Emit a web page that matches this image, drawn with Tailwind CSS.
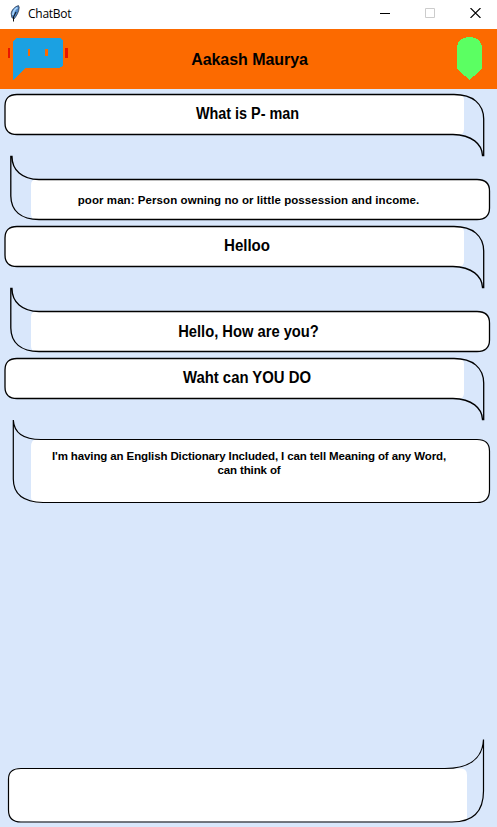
<!DOCTYPE html>
<html lang="en">
<head>
<meta charset="utf-8">
<title>ChatBot</title>
<script src="https://cdn.jsdelivr.net/npm/@tailwindcss/browser@4"></script>
</head>
<body class="w-[497px] h-[827px] overflow-hidden bg-[#d9e7fb] flex flex-col font-['Liberation_Sans',Arial,sans-serif] text-black">
<svg class="hidden">
  <defs>
    <g id="user">
      <path d="M16 5.5H459Q464 5.5 464 11V40Q464 45.500 459 45.500H16Q5 45.500 5 35V16Q5 5.500 16 5.500Z" fill="#fff"/>
      <path d="M454 5.500H17Q5 5.500 5 17V34Q5 45.500 17 45.500H453C472 46 482 55 482.500 66.500H483.700V30C483.500 15 473 5.500 454 5.500Z" fill="none" stroke="#000" stroke-width="1.300"/>
    </g>
    <g id="bot">
      <path d="M36 24.500H478Q489.500 24.500 489.500 36V53Q489.500 64.500 478 64.500H36Q31 64.500 31 59V30Q31 24.500 36 24.500Z" fill="#fff"/>
      <path d="M39 24.500H477Q489.500 24.500 489.500 36V53Q489.500 64.500 477 64.500H39C21 64.500 11 56 10.800 41V1.500H12C12 15 22 24.500 39 24.500Z" fill="none" stroke="#000" stroke-width="1.300"/>
    </g>
  </defs>
</svg>
<header class="h-[29px] shrink-0 bg-white flex items-center justify-between pl-[10px] pr-[15px]">
  <div class="flex items-center gap-[8px]">
    <svg class="w-[10px] h-[17px] -mt-[3px]" viewBox="0 0 10 17">
      <path d="M8.500 .6C5 1.500 1.500 5 1.200 8.500L1.800 12.500L4 14C6.500 11 9 7 9.200 2.500Z" fill="#4f86c6" stroke="#1c2a3c" stroke-width=".7"/>
      <path d="M7.500 2.500C5 4 3 7 2.800 10" stroke="#a9d4fa" stroke-width="1.800" fill="none"/>
      <path d="M6 7L3.500 12V16.500" stroke="#111" stroke-width="1" fill="none"/>
    </svg>
    <span class="font-['Open_Sans','Noto_Sans',sans-serif] text-[12px] leading-[16px] tracking-[-0.25px] -mt-[2px]">ChatBot</span>
  </div>
  <div class="flex items-center gap-[35px] -mt-[3px] mr-px">
    <svg class="w-[10px] h-[10px]" viewBox="0 0 10 10"><path d="M0 5.500H10" stroke="#000"/></svg>
    <svg class="w-[10px] h-[10px]" viewBox="0 0 10 10"><path d="M.5 .5H9.500V9.500H.5Z" stroke="#ccc" fill="none"/></svg>
    <svg class="w-[11px] h-[10px]" viewBox="0 0 11 10"><path d="M.5 0L10.500 10M10.500 0L.5 10" stroke="#000" stroke-width="1.100"/></svg>
  </div>
</header>
<section class="h-[60px] shrink-0 bg-[#fc6a00] flex items-start justify-between pl-[8px] pr-[15px] pt-[8px]">
  <svg class="w-[60px] h-[44px]" viewBox="0 0 60 44" shape-rendering="crispEdges">
    <path d="M8 1H52Q55 2 55 5V27Q55 30 51 31H18L5 43V4Z" fill="#1ba1e2"/>
    <path d="M0 11h2v10H0zM57 11h3v10h-3z" fill="#e81500"/>
    <path d="M20 12h2v7h-2zM37 12h3v7h-3z" fill="#fc6a00"/>
  </svg>
  <h1 class="mt-[13px] h-[20px] leading-[20px] w-[240px] -ml-[6px] mr-[20px] text-center text-[16px] tracking-[-0.05px] font-bold">Aakash Maurya</h1>
  <svg class="w-[25px] h-[44px]" viewBox="0 0 25 44" shape-rendering="crispEdges">
    <path d="M0 11C0 4 5 0 12.500 0S25 4 25 11V32L12.500 43L0 32Z" fill="#5bff62"/>
  </svg>
</section>
<main class="grow flex flex-col">
  <div class="relative h-[66px] pt-[15px] shrink-0"><svg class="absolute inset-0 w-[497px] h-[66px] overflow-visible"><use href="#user"/></svg><p class="relative w-[495px] text-center text-[16px] scale-x-[0.9] leading-[20px] font-bold">What is P- man</p></div>
  <div class="relative h-[66px] pt-[35px] shrink-0"><svg class="absolute inset-0 w-[497px] h-[66px] overflow-visible"><use href="#bot"/></svg><p class="relative w-[497px] text-center text-[11.500px] tracking-[0.07px] leading-[20px] font-bold">poor man: Person owning no or little possession and income.</p></div>
  <div class="relative h-[66px] pt-[15px] shrink-0"><svg class="absolute inset-0 w-[497px] h-[66px] overflow-visible"><use href="#user"/></svg><p class="relative w-[494px] text-center text-[16px] scale-x-[0.94] leading-[20px] font-bold">Helloo</p></div>
  <div class="relative h-[66px] pt-[35px] shrink-0"><svg class="absolute inset-0 w-[497px] h-[66px] overflow-visible"><use href="#bot"/></svg><p class="relative w-[497px] text-center text-[16px] scale-x-[0.92] leading-[20px] font-bold">Hello, How are you?</p></div>
  <div class="relative h-[66px] pt-[15px] shrink-0"><svg class="absolute inset-0 w-[497px] h-[66px] overflow-visible"><use href="#user"/></svg><p class="relative w-[494px] text-center text-[16px] scale-x-[0.93] leading-[20px] font-bold">Waht can YOU DO</p></div>
  <div class="relative h-[86px] pt-[30px] shrink-0">
    <svg class="absolute inset-0 w-[497px] h-[86px] overflow-visible">
      <path d="M36 20.500H478Q489.500 20.500 489.500 32V71Q489.500 83.500 478 83.500H36Q31 83.500 31 78V28Q31 20.500 36 20.500Z" fill="#fff"/>
      <path d="M41 20.500H477Q489.500 20.500 489.500 32V71Q489.500 83.500 477 83.500H43C23 83 13.300 75 13.300 60V1C14 13 22 20.500 41 20.500Z" fill="none" stroke="#000" stroke-width="1.200"/>
    </svg>
    <p class="relative w-[498px] text-center text-[11.500px] tracking-[-0.115px] leading-[14px] font-bold">I'm having an English Dictionary Included, I can tell Meaning of any Word,<br>can think of</p>
  </div>
</main>
<footer class="h-[88px] shrink-0">
  <svg class="w-[497px] h-[88px]" viewBox="0 0 497 88">
    <path d="M20 29.500H461Q467 29.500 467 36V77Q467 82.500 462 82.500H20Q8.500 82.500 8.500 72V40Q8.500 29.500 20 29.500Z" fill="#fff"/>
    <path d="M445 29.500H21Q8.500 29.500 8.500 40V71Q8.500 83 21 83H452C474 83 483.500 71 483.500 52V.5C482.500 21 467 29.500 445 29.500Z" fill="none" stroke="#000" stroke-width="1.200"/>
  </svg>
</footer>
</body>
</html>
